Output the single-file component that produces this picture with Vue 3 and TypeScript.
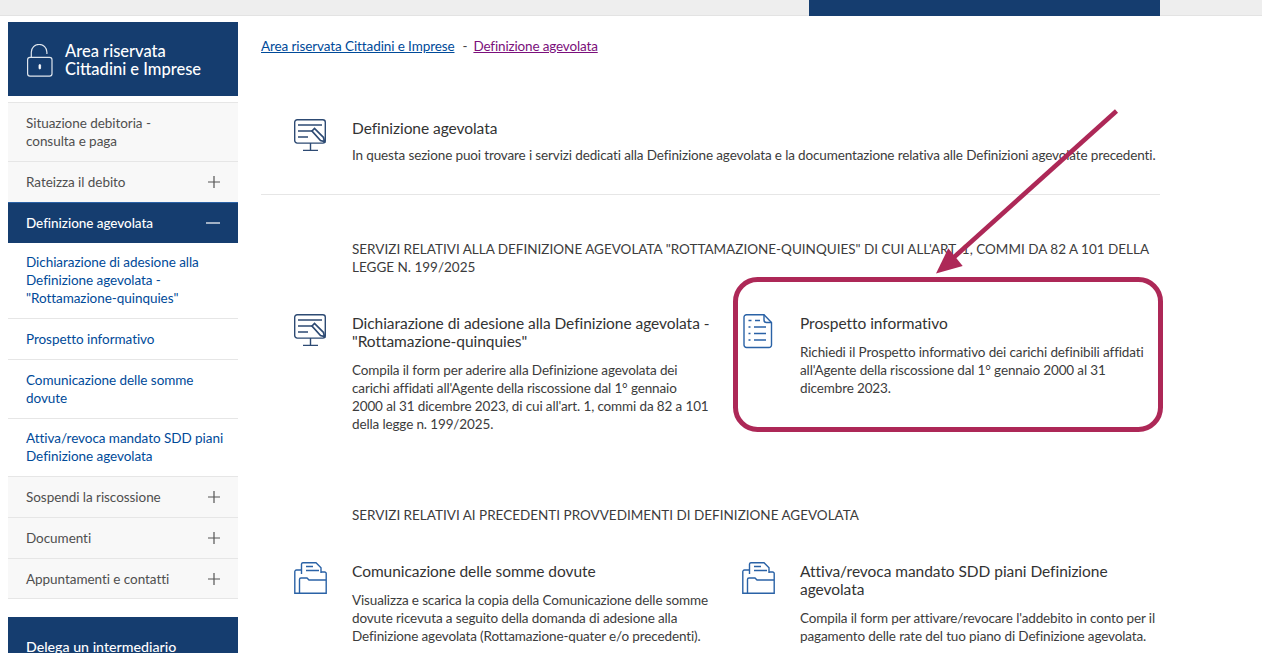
<script setup lang="ts">
interface Item { label: string; kind: 'plain' | 'plus' | 'open' | 'sub' }
const menu: Item[] = [
  { label: 'Situazione debitoria -\nconsulta e paga', kind: 'plain' },
  { label: 'Rateizza il debito', kind: 'plus' },
  { label: 'Definizione agevolata', kind: 'open' },
  { label: 'Dichiarazione di adesione alla Definizione agevolata - "Rottamazione-quinquies"', kind: 'sub' },
  { label: 'Prospetto informativo', kind: 'sub' },
  { label: 'Comunicazione delle somme dovute', kind: 'sub' },
  { label: 'Attiva/revoca mandato SDD piani Definizione agevolata', kind: 'sub' },
  { label: 'Sospendi la riscossione', kind: 'plus' },
  { label: 'Documenti', kind: 'plus' },
  { label: 'Appuntamenti e contatti', kind: 'plus' },
]
</script>

<template>
  <div class="page">
    <header class="topbar"><div class="topblock"></div></header>
    <div class="layout">
      <aside class="side">
        <div class="side-head">
          <svg class="lock" width="26" height="33" viewBox="0 0 26 33" fill="none" stroke="#dfe6ee" stroke-width="1.2">
            <rect x=".6" y="13.4" width="24.4" height="18.8" rx="2.4" />
            <path d="M4.3 13V8.2a7.8 7.8 0 0 1 15.6 0V10" />
            <rect x="12" y="20.5" width="1.6" height="4.5" rx=".8" fill="#fff" stroke="#fff" stroke-width=".8" />
          </svg>
          <div class="side-title">Area riservata<br />Cittadini e Imprese</div>
        </div>
        <nav class="menu">
          <a v-for="m in menu" :key="m.label" class="item" :class="m.kind">
            <span class="lbl">{{ m.label }}</span>
            <svg v-if="m.kind === 'plus'" class="tog" width="12" height="12" viewBox="0 0 12 12" stroke="#555" stroke-width="1.2"><path d="M0 6h12M6 0v12" /></svg>
            <svg v-if="m.kind === 'open'" class="tog" width="14" height="12" viewBox="0 0 14 12" stroke="#fff" stroke-width="1.2"><path d="M0 6h14" /></svg>
          </a>
        </nav>
        <div class="delega">Delega un intermediario</div>
      </aside>

      <main class="main">
        <div class="crumbs">
          <a class="c1">Area riservata Cittadini e Imprese</a>
          <span class="sep">-</span>
          <a class="c2">Definizione agevolata</a>
        </div>

        <section class="intro">
          <svg class="ico" width="32" height="32" viewBox="0 0 32 32" fill="none" stroke="#2d4a73" stroke-width="1.4">
            <rect x=".7" y=".7" width="30.6" height="23.4" rx="2.5" />
            <path d="M16.5 24v7M9 31.4h15M4 6h24M4 12h14M4 18h10" />
            <path d="M18 12l2.5-2.5 9 9 1 4-4-1z" fill="#fff" stroke-width="1.7" />
          </svg>
          <div>
            <h2 class="t">Definizione agevolata</h2>
            <p class="d nowrap">In questa sezione puoi trovare i servizi dedicati alla Definizione agevolata e la documentazione relativa alle Definizioni agevolate precedenti.</p>
          </div>
        </section>

        <h3 class="sec first">SERVIZI RELATIVI ALLA DEFINIZIONE AGEVOLATA "ROTTAMAZIONE-QUINQUIES" DI CUI ALL'ART. 1, COMMI DA 82 A 101 DELLA LEGGE N. 199/2025</h3>

        <div class="cards">
          <article class="card">
            <svg class="ico" width="32" height="32" viewBox="0 0 32 32" fill="none" stroke="#2d4a73" stroke-width="1.4">
              <rect x=".7" y=".7" width="30.6" height="23.4" rx="2.5" />
              <path d="M16.5 24v7M9 31.4h15M4 6h24M4 12h14M4 18h10" />
              <path d="M18 12l2.5-2.5 9 9 1 4-4-1z" fill="#fff" stroke-width="1.7" />
            </svg>
            <div>
              <h2 class="t">Dichiarazione di adesione alla Definizione agevolata - "Rottamazione-quinquies"</h2>
              <p class="d">Compila il form per aderire alla Definizione agevolata dei carichi affidati all'Agente della riscossione dal 1° gennaio 2000 al 31 dicembre 2023, di cui all'art. 1, commi da 82 a 101 della legge n. 199/2025.</p>
            </div>
          </article>
          <article class="card">
            <svg class="ico doc" width="30" height="35" viewBox="0 0 30 35" fill="none" stroke="#2a62a6" stroke-width="1.4">
              <path d="M21 .8H3.5a2.5 2.5 0 0 0-2.5 2.5V31a2.5 2.5 0 0 0 2.5 2.5h22.5A2.5 2.5 0 0 0 28.5 31V8.5z" />
              <path d="M21 .8V6a2.5 2.5 0 0 0 2.5 2.5h5" />
              <path d="M5.5 6.5h3M12 6.5h5M5.5 13h2M11 13h12M5.5 19.5h2M11 19.5h12M5.5 26h2M11 26h12" />
            </svg>
            <div>
              <h2 class="t">Prospetto informativo</h2>
              <p class="d">Richiedi il Prospetto informativo dei carichi definibili affidati all'Agente della riscossione dal 1° gennaio 2000 al 31 dicembre 2023.</p>
            </div>
          </article>
        </div>

        <h3 class="sec second">SERVIZI RELATIVI AI PRECEDENTI PROVVEDIMENTI DI DEFINIZIONE AGEVOLATA</h3>

        <div class="cards">
          <article class="card">
            <svg class="ico folder" width="33" height="32" viewBox="0 0 33 32" fill="none" stroke="#2a62a6" stroke-width="1.4">
              <path d="M7.5 12V2A1.5 1.5 0 0 1 9 .7h13l5 5V11" />
              <path d="M12 4.5h7M12 8.5h13" />
              <path d="M7 8H2.5A1.8 1.8 0 0 0 .8 10v21.3h31.4V11.8A1.6 1.6 0 0 0 30.5 10H27" />
              <path d="M5.5 31V17.5A1.5 1.5 0 0 1 7 16h6l2 2h17" />
            </svg>
            <div>
              <h2 class="t">Comunicazione delle somme dovute</h2>
              <p class="d">Visualizza e scarica la copia della Comunicazione delle somme dovute ricevuta a seguito della domanda di adesione alla Definizione agevolata (Rottamazione-quater e/o precedenti).</p>
            </div>
          </article>
          <article class="card">
            <svg class="ico folder r" width="33" height="32" viewBox="0 0 33 32" fill="none" stroke="#2a62a6" stroke-width="1.4">
              <path d="M7.5 12V2A1.5 1.5 0 0 1 9 .7h13l5 5V11" />
              <path d="M12 4.5h7M12 8.5h13" />
              <path d="M7 8H2.5A1.8 1.8 0 0 0 .8 10v21.3h31.4V11.8A1.6 1.6 0 0 0 30.5 10H27" />
              <path d="M5.5 31V17.5A1.5 1.5 0 0 1 7 16h6l2 2h17" />
            </svg>
            <div>
              <h2 class="t">Attiva/revoca mandato SDD piani Definizione agevolata</h2>
              <p class="d">Compila il form per attivare/revocare l'addebito in conto per il pagamento delle rate del tuo piano di Definizione agevolata.</p>
            </div>
          </article>
        </div>
      </main>
    </div>

    <svg class="annot" width="1262" height="653" viewBox="0 0 1262 653" fill="none">
      <rect x="735.5" y="279.5" width="425" height="150" rx="22" stroke="#ad2857" stroke-width="5" />
      <path d="M1116.5 111L952 259" stroke="#ad2857" stroke-width="4.6" />
      <path d="M936 273.5L948.3 248.3 962.7 266z" fill="#ad2857" />
    </svg>
  </div>
</template>

<style>
html, body { margin: 0; background: #fff; overflow: hidden; }
</style>

<style scoped>
.page { position: relative; width: 1262px; height: 653px; overflow: hidden; font-family: Lato, "Noto Sans", sans-serif; color: #3c3c3c; }
.annot { position: absolute; top: 0; left: 0; pointer-events: none; }
.topbar { height: 15px; background: #eee; border-bottom: 1px solid #e3e3e3; display: flex; justify-content: flex-end; padding-right: 102px; }
.topblock { width: 351px; height: 16px; background: #153d6f; }
.layout { display: flex; padding: 6px 0 0 8px; gap: 23px; }
.side { width: 230px; flex: none; }
.side-head { height: 74px; background: #153d6f; display: flex; align-items: center; gap: 12px; padding-left: 19px; box-sizing: border-box; }
.lock { flex: none; margin-top: 3px; }
.side-title { color: #fff; font-size: 16.5px; line-height: 18px; font-weight: 500; margin-top: 2px; }
.menu { margin-top: 6px; border-top: 1px solid #e6e6e6; }
.item { display: flex; align-items: center; justify-content: space-between; box-sizing: border-box; padding: 11px 18px; font-size: 13.5px; line-height: 18px; letter-spacing: -.05px; background: #f8f8f8; border-bottom: 1px solid #e6e6e6; color: #4f4f4f; white-space: pre-line; }
.item.open { background: #153d6f; color: #fff; font-weight: 500; border-top: 1px solid #2a62a6; border-bottom: none; margin-top: -1px; height: 41px; }
.item.sub { background: #fff; color: #004a99; padding-right: 10px; }
.item.open + .sub { padding-top: 10px; }
.item.sub:nth-child(7) { padding-top: 10px; }
.item:last-child { padding-bottom: 10px; }
.item.sub .lbl { width: 198px; }
.tog { flex: none; }
.delega { margin-top: 18px; height: 60px; background: #153d6f; color: #fff; font-size: 14.2px; padding: 21px 18px; box-sizing: border-box; font-weight: 500; }
.main { width: 899px; flex: none; }
.crumbs { margin-top: 15px; font-size: 13.5px; line-height: 18px; letter-spacing: -.1px; display: flex; gap: 8px; }
.c1 { color: #004a99; text-decoration: underline; }
.c2 { color: #7b0f7b; text-decoration: underline; margin-left: -2px; letter-spacing: -.15px; }
.sep { color: #444; }
.intro { display: flex; margin-top: 64px; padding-bottom: 30px; border-bottom: 1px solid #e6e6e6; }
.ico { flex: none; margin-left: 33px; margin-right: 26px; }
.ico.doc { margin-right: 27px; }
.ico.folder { margin-right: 25px; }
.ico.folder.r { margin-left: 32px; }
.t { margin: 0; font-size: 15.5px; line-height: 18px; font-weight: 400; color: #333; letter-spacing: -.05px; }
.d { margin: 11px 0 0; font-size: 13.5px; line-height: 18px; letter-spacing: -.13px; color: #3c3c3c; }
.intro .d { margin-top: 9px; }
.nowrap { white-space: nowrap; }
.sec { margin: 0 0 0 91px; font-size: 13.5px; line-height: 18px; font-weight: 400; color: #3c3c3c; }
.first { margin-top: 45px; }
.second { margin-top: 73px; }
.cards { display: grid; grid-template-columns: 449px 450px; }
.card { display: flex; padding: 38px 0 0 0; }
</style>
